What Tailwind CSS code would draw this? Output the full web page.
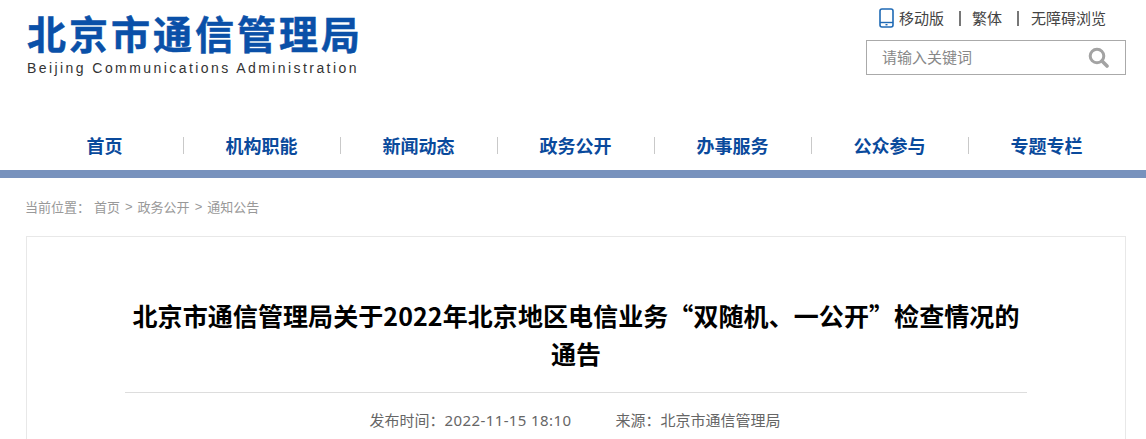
<!DOCTYPE html>
<html lang="zh-CN">
<head>
<meta charset="utf-8">
<script src="https://cdn.jsdelivr.net/npm/@tailwindcss/browser@4"></script>
<title>北京市通信管理局</title>
</head>
<body class="bg-white h-[439px] overflow-hidden font-['Noto_Sans_CJK_SC','Noto_Sans',sans-serif]">
<header class="h-[170px] px-[27px] flex flex-col">
  <div class="flex justify-between h-[132px]">
    <div class="pt-[10px]">
      <div class="text-[39px] leading-[45px] font-bold text-[#0a50a8] tracking-[3px] whitespace-nowrap [-webkit-text-stroke:0.5px_#0a50a8]">北京市通信管理局</div>
      <div class="font-['Liberation_Sans',sans-serif] text-[14px] leading-[16px] mt-[5px] text-[#333] tracking-[2.43px] whitespace-nowrap">Beijing Communications Administration</div>
    </div>
    <div class="w-[260px] mr-[-7px] flex flex-col">
      <div class="flex items-center h-[18px] mt-[9px] pl-[13px] text-[15px] leading-[18px] text-[#444] whitespace-nowrap">
        <svg class="w-[15px] h-[20px] mr-[5px]" viewBox="0 0 15 20" fill="none"><rect x="1" y="1" width="13" height="18" rx="2" stroke="#1f6ab5" stroke-width="1.6"/><path d="M1 14.5H14" stroke="#1f6ab5" stroke-width="1.4"/><rect x="6.5" y="16" width="2" height="1.4" fill="#1f6ab5"/></svg>
        <span>移动版</span>
        <span class="w-[2px] h-[15px] bg-[#777] ml-[15px] mr-[11px]"></span>
        <span>繁体</span>
        <span class="w-[2px] h-[15px] bg-[#777] ml-[15px] mr-[12px]"></span>
        <span>无障碍浏览</span>
      </div>
      <div class="mt-[13px] h-[35px] w-[260px] border border-[#aaa] flex items-center justify-between pl-[15px] pr-[16px] text-[15px] text-[#888]">
        <span class="leading-[30px] mt-[-2px]">请输入关键词</span>
        <svg class="w-[21px] h-[21px]" viewBox="0 0 21 21" fill="none"><circle cx="9" cy="9" r="6.8" stroke="#a3a3a3" stroke-width="3"/><path d="M14 14L19 19" stroke="#a3a3a3" stroke-width="3.6" stroke-linecap="round"/></svg>
      </div>
    </div>
  </div>
  <nav class="grid grid-cols-[repeat(7,157px)] h-[25px] text-[18px] font-bold text-[#0a4a9c] text-center">
    <a class="border-r border-[#c9c9c9] h-[17px] mt-[5px] pr-[1px] leading-[17px]">首页</a>
    <a class="border-r border-[#c9c9c9] h-[17px] mt-[5px] pr-[1px] leading-[17px]">机构职能</a>
    <a class="border-r border-[#c9c9c9] h-[17px] mt-[5px] pr-[1px] leading-[17px]">新闻动态</a>
    <a class="border-r border-[#c9c9c9] h-[17px] mt-[5px] pr-[1px] leading-[17px]">政务公开</a>
    <a class="border-r border-[#c9c9c9] h-[17px] mt-[5px] pr-[1px] leading-[17px]">办事服务</a>
    <a class="border-r border-[#c9c9c9] h-[17px] mt-[5px] pr-[1px] leading-[17px]">公众参与</a>
    <a class="h-[17px] mt-[5px] pr-[2px] leading-[17px]">专题专栏</a>
  </nav>
</header>
<div class="h-[8px] bg-[#7892bd]"></div>
<div class="pl-[25px] pt-[21px] h-[58px] text-[13px] leading-[16px] text-[#999] whitespace-nowrap flex"><span class="w-[69px]">当前位置：</span><span>首页</span><span class="mx-[5px] font-['Liberation_Sans']">&gt;</span><span>政务公开</span><span class="mx-[5px] font-['Liberation_Sans']">&gt;</span><span>通知公告</span></div>
<main class="mx-[26px] w-[1100px] h-[203px] border border-b-0 border-[#e8e8e8] px-[98px] pt-[59px] text-center">
  <h1 class="text-[25px] leading-[38px] font-bold text-black tracking-[0.08px]">北京市通信管理局关于2022年北京地区电信业务“双随机、一公开”检查情况的通告</h1>
  <div class="mt-[20px] border-t border-[#ddd] pt-[17px] pr-[2px] text-[15px] leading-[20px] text-[#666] flex justify-center gap-[44px]">
    <span>发布时间：<span class="font-['Noto_Sans',sans-serif] tracking-[0.4px]">2022-11-15 18:10</span></span>
    <span>来源：北京市通信管理局</span>
  </div>
</main>
</body>
</html>
